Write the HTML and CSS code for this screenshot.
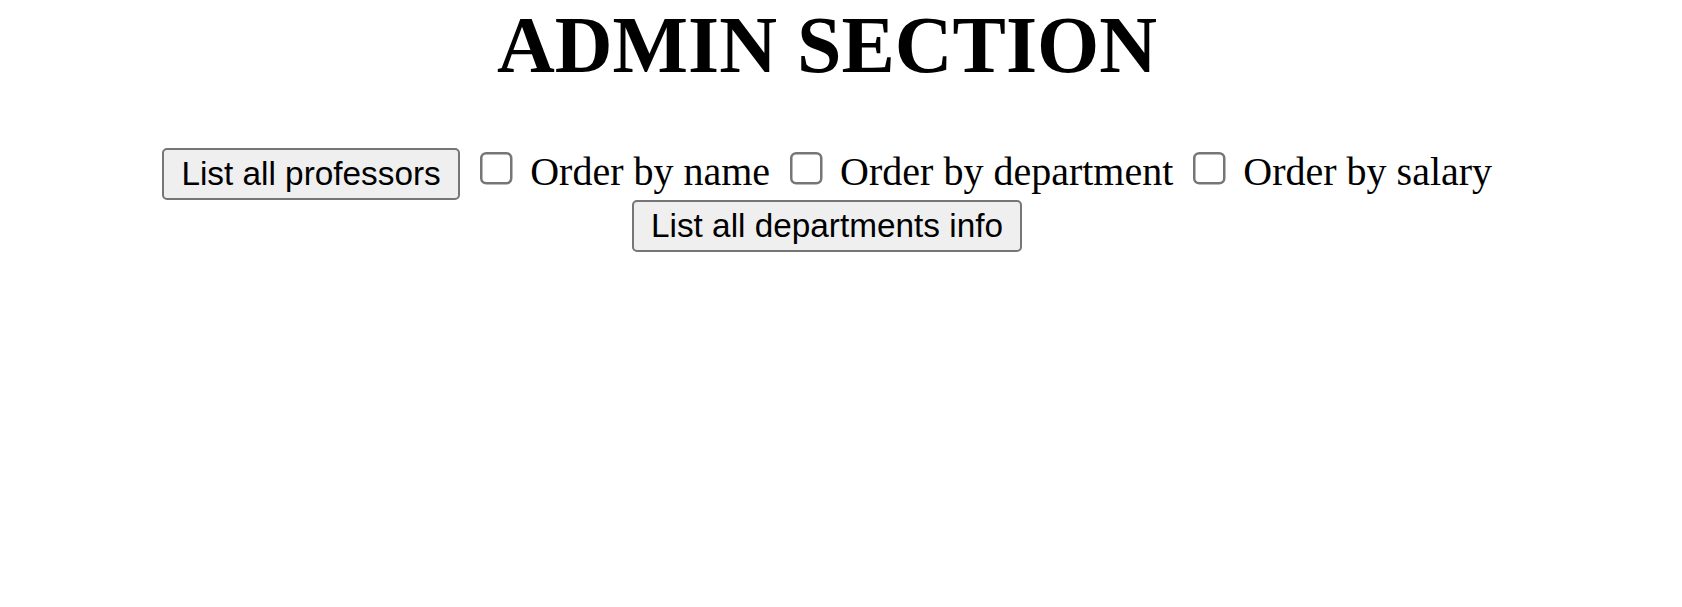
FILE: index.html
```html
<!DOCTYPE html>
<html>
<head>
<meta charset="utf-8">
<title>Admin Section</title>
<link rel="stylesheet" href="styles.css">
</head>
<body>
<div class="page">
  <h1 class="title">ADMIN SECTION</h1>
  <div class="controls">
    <button class="btn" type="button">List all professors</button>
    <input class="check" type="checkbox" id="byName"> <label for="byName">Order by name</label>
    <input class="check" type="checkbox" id="byDept"> <label for="byDept">Order by department</label>
    <input class="check" type="checkbox" id="bySalary"> <label for="bySalary">Order by salary</label>
    <button class="btn" type="button">List all departments info</button>
  </div>
</div>
</body>
</html>
```
FILE: styles.css
```css
html, body {
  margin: 0;
  padding: 0;
  background: #ffffff;
}

.page {
  zoom: 2.5;
  padding-right: 11.2px;
  font-family: "Liberation Serif", "Times New Roman", serif;
  font-size: 16px;
  color: #000;
  text-align: center;
}

.title {
  font-size: 2em;
  font-weight: bold;
  margin: 0 0 0.67em;
}

.controls {
  text-align: center;
}

.btn {
  font-family: "Liberation Sans", Arial, sans-serif;
  font-size: 13.333px;
  color: #000;
  background: #efefef;
  border: 1px solid #767676;
  border-radius: 2px;
  padding: 2px 7px;
}

.check {
  margin: 3px 3px 3px 4px;
}
```
